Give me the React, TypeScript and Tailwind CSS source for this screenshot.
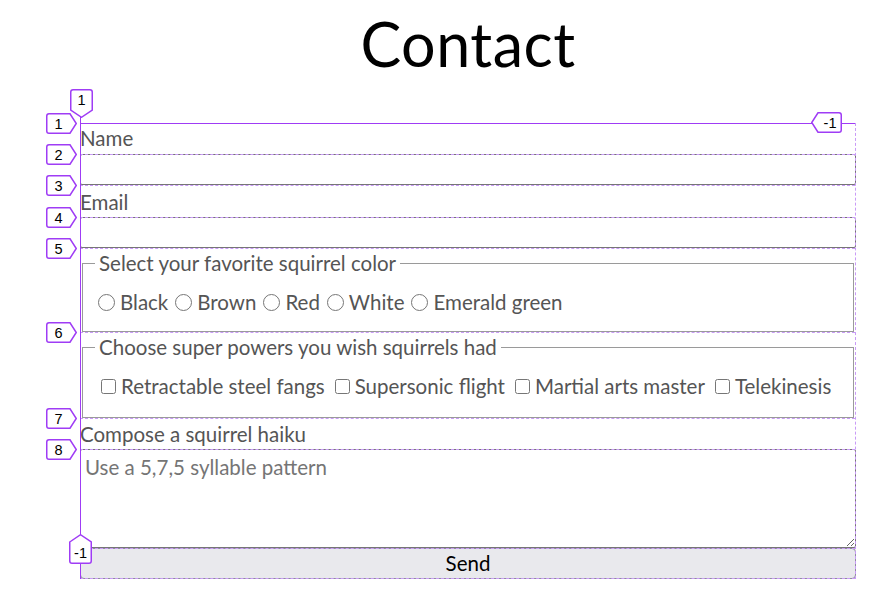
import React from 'react';

const PURPLE = '#9f3cf5';

type Dir = 'right' | 'down' | 'left' | 'up';

const shapes: Record<Dir, { w: number; h: number; d: string; tx: number; ty: number }> = {
  right: { w: 31, h: 21, d: 'M3 0.75 H24 L30.25 10.5 L24 20.25 H3 Q0.75 20.25 0.75 18 V3 Q0.75 0.75 3 0.75 Z', tx: 12.5, ty: 15.5 },
  down: { w: 23, h: 29, d: 'M3 0.75 H20 Q22.25 0.75 22.25 3 V21 L11.5 28.25 L0.75 21 V3 Q0.75 0.75 3 0.75 Z', tx: 11.5, ty: 16 },
  left: { w: 31, h: 21, d: 'M7 0.75 H28 Q30.25 0.75 30.25 3 V18 Q30.25 20.25 28 20.25 H7 L0.75 10.5 Z', tx: 19, ty: 15.5 },
  up: { w: 23, h: 30, d: 'M0.75 8 L11.5 0.75 L22.25 8 V27 Q22.25 29.25 20 29.25 H3 Q0.75 29.25 0.75 27 Z', tx: 11.5, ty: 23.5 },
};

const Badge: React.FC<{ dir: Dir; label: string; className: string }> = ({ dir, label, className }) => {
  const s = shapes[dir];
  return (
    <svg className={`absolute ${className}`} width={s.w} height={s.h} viewBox={`0 0 ${s.w} ${s.h}`}>
      <path d={s.d} fill="white" stroke={PURPLE} strokeWidth="1.5" />
      <text x={s.tx} y={s.ty} textAnchor="middle" fontSize="14.5" fontFamily="Liberation Sans, Arial, sans-serif" fill="#000">
        {label}
      </text>
    </svg>
  );
};

// same row template as the form, so the overlay lines sit on the track edges
const ROWS = 'grid-rows-[31px_31px_32px_31px_84px_86px_31px_99px_31px]';

const GridOverlay: React.FC = () => (
  <div className={`pointer-events-none absolute inset-0 grid ${ROWS} border-r border-dashed border-r-[#c99bf7]`}>
    {Array.from({ length: 9 }, (_, i) => (
      <div
        key={i}
        className={`relative border-t ${i === 0 ? 'border-solid border-[#9f3cf5]' : 'border-dashed border-[#c99bf7]'} ${i === 8 ? 'border-b border-b-[#c99bf7]' : ''}`}
      >
        {i < 8 && <Badge dir="right" label={String(i + 1)} className="-left-[34px] -top-[11px]" />}
      </div>
    ))}
    {/* column line 1 */}
    <div className="absolute -top-[6px] bottom-0 left-0 w-px bg-[#9f3cf5]" />
    <Badge dir="down" label="1" className="-left-[10px] -top-[34px]" />
    <Badge dir="left" label="-1" className="-top-[11px] right-[13px]" />
    <Badge dir="up" label="-1" className="-left-[11px] bottom-[15px]" />
  </div>
);

const colors = ['Black', 'Brown', 'Red', 'White', 'Emerald green'];
const powers = ['Retractable steel fangs', 'Supersonic flight', 'Martial arts master', 'Telekinesis'];

export default function App() {
  return (
    <div className="min-h-screen bg-white font-['Lato',sans-serif] text-[#555]">
      <div className="ml-[80px] w-[776px]">
        <h1 className="flex h-[123px] justify-center pt-[3px] text-[61px] font-normal leading-[82px] tracking-[0.5px] text-black">
          Contact
        </h1>
        <div className="relative">
          <form className={`grid ${ROWS} text-[20.5px]`}>
            <label className="leading-[31px]">Name</label>
            <input type="text" className="rounded-[2px] border border-[#767676] px-1" />
            <label className="leading-[34px]">Email</label>
            <input type="email" className="rounded-[2px] border border-[#767676] px-1" />

            <fieldset className="mx-[2px] border border-[#9a9a9a] px-[12px]">
              <legend className="px-[4px] leading-[30px]">Select your favorite squirrel color</legend>
              <div className="mt-[9px] flex items-center gap-[4px] leading-[30px]">
                {colors.map(c => (
                  <label key={c} className="flex items-center">
                    <input type="radio" name="color" className="mr-[5px] ml-[3px] h-[17px] w-[17px]" />
                    {c}
                  </label>
                ))}
              </div>
            </fieldset>

            <fieldset className="mx-[2px] border border-[#9a9a9a] px-[12px]">
              <legend className="px-[4px] leading-[30px]">Choose super powers you wish squirrels had</legend>
              <div className="mt-[9px] flex items-center gap-[4px] leading-[30px]">
                {powers.map(p => (
                  <label key={p} className="flex items-center">
                    <input type="checkbox" className="mr-[5px] ml-[6px] h-[15px] w-[15px]" />
                    {p}
                  </label>
                ))}
              </div>
            </fieldset>

            <label className="leading-[33px]">Compose a squirrel haiku</label>
            <textarea
              className="rounded-[2px] border border-[#767676] px-[4px] py-[2px] leading-[30px] placeholder:text-[#757575]"
              placeholder="Use a 5,7,5 syllable pattern"
            />
            <button type="button" className="rounded-[4px] border border-[#8f8f9d] bg-[#e9e9ed] leading-[29px] text-black">
              Send
            </button>
          </form>
          <GridOverlay />
        </div>
      </div>
    </div>
  );
}
